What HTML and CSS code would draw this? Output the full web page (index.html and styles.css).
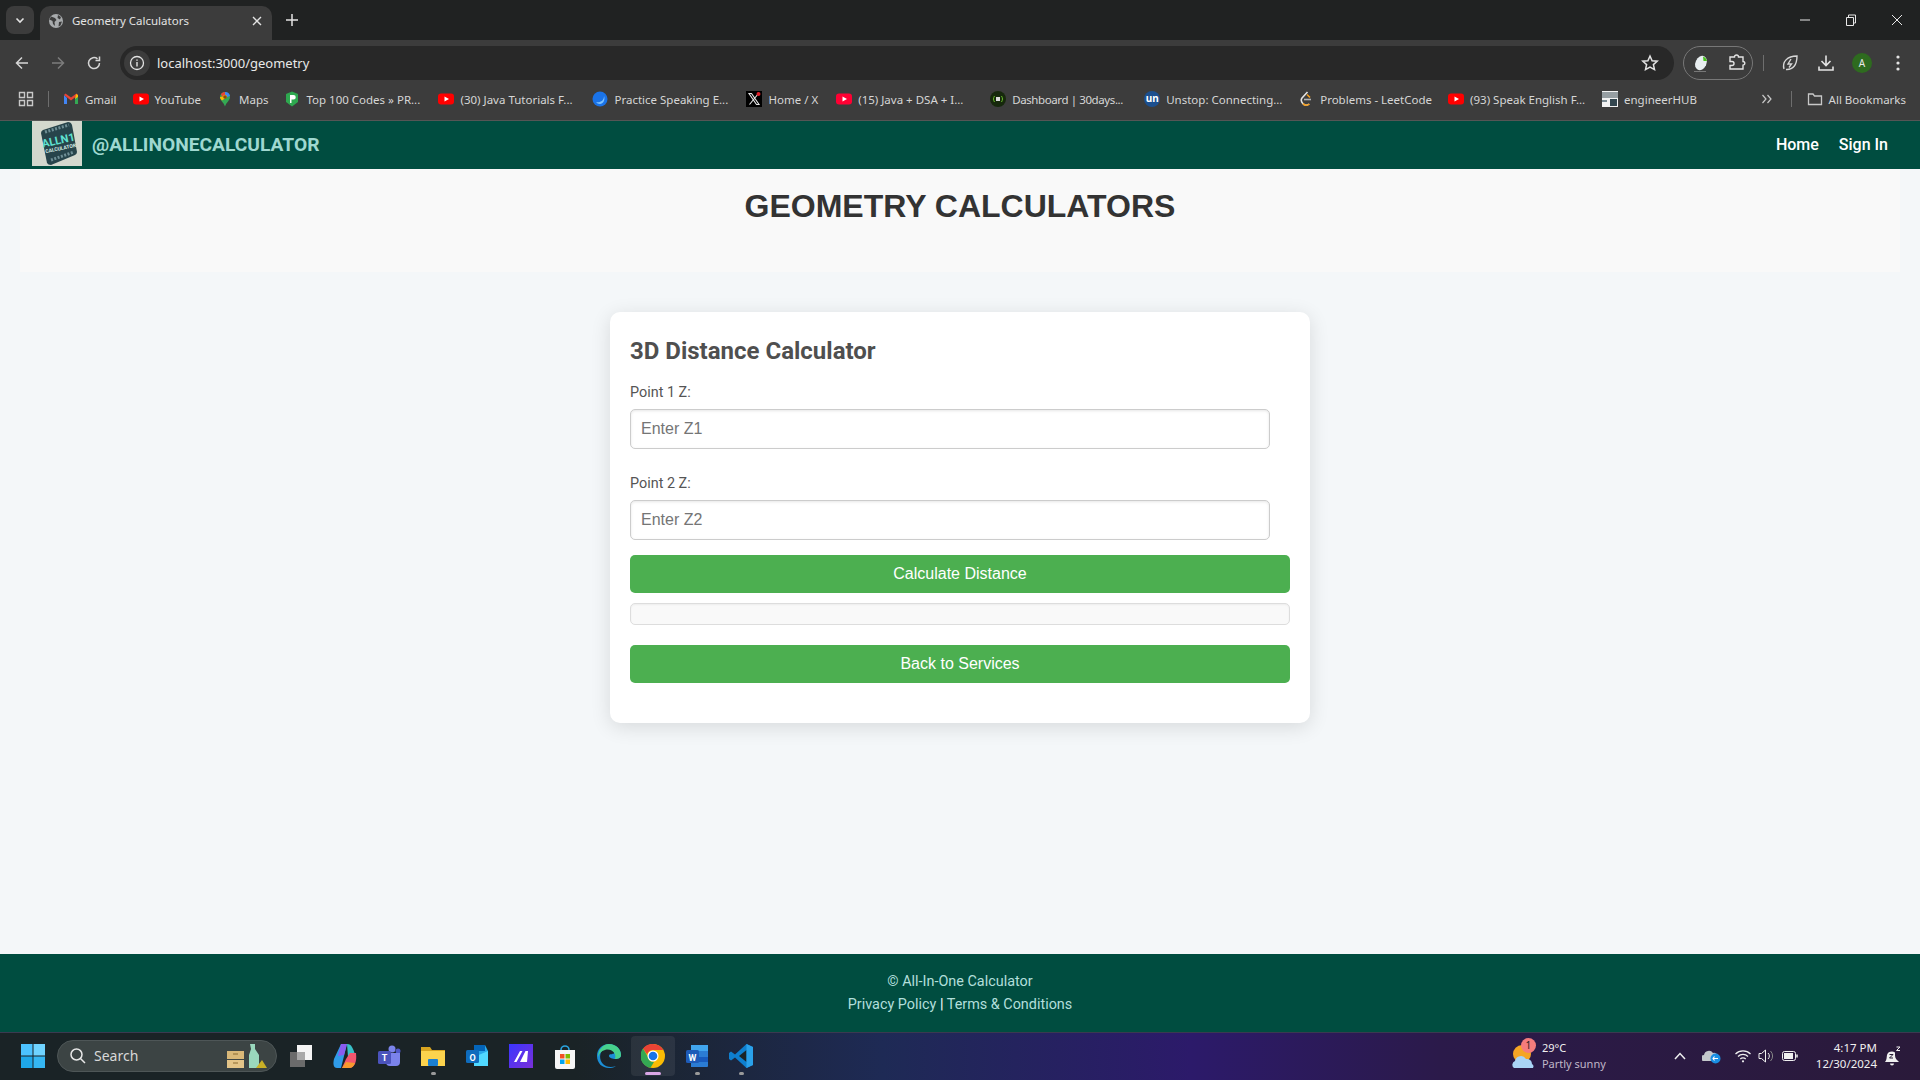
FILE: index.html
```html
<!DOCTYPE html>
<html lang="en">
<head>
    <meta charset="UTF-8">
    <title>Geometry Calculators</title>
    <link rel="stylesheet" href="styles.css">
</head>
<body>
<!-- browser chrome -->
<div class="tabstrip">
    <div class="tabsearch"><svg width="12" height="12" viewBox="0 0 12 12"><path d="M2.5 4.5 6 8l3.5-3.5" fill="none" stroke="#e3e3e3" stroke-width="1.6"/></svg></div>
    <div class="tab">
        <svg width="16" height="16" viewBox="0 0 16 16"><circle cx="8" cy="8" r="7" fill="#a8abad"/><path d="M3 3.5 7 5 8.500 7 6.500 9 7 13 5 11 4.500 8 1.500 6.500ZM10 2l3 2-1 2.500-2.500-1.500ZM11 9l3-.5-1.500 4-2 1Z" fill="#3c3c3c"/></svg>
        <span class="tabtitle">Geometry Calculators</span>
        <svg width="12" height="12" viewBox="0 0 12 12"><path d="M2 2l8 8M10 2l-8 8" stroke="#e3e3e3" stroke-width="1.400"/></svg>
    </div>
    <svg class="newtab" width="14" height="14" viewBox="0 0 14 14"><path d="M7 1v12M1 7h12" stroke="#e3e3e3" stroke-width="1.500"/></svg>
    <div class="winbtns">
        <svg width="12" height="12" viewBox="0 0 12 12"><path d="M1 6h10" stroke="#e8e8e8"/></svg>
        <svg width="12" height="12" viewBox="0 0 12 12"><path d="M1.500 3.500h7v8h-7zM3.500 3.500V1h7v8H8.500" fill="none" stroke="#e8e8e8"/></svg>
        <svg width="12" height="12" viewBox="0 0 12 12"><path d="M1 1l10 10M11 1 1 11" stroke="#e8e8e8"/></svg>
    </div>
</div>
<div class="toolbar">
    <div class="navbtns">
        <svg width="16" height="16" viewBox="0 0 16 16"><path d="M14 8H2.500M8 2.500 2.500 8 8 13.500" fill="none" stroke="#d6d6d6" stroke-width="1.500"/></svg>
        <svg width="16" height="16" viewBox="0 0 16 16"><path d="M2 8h11.500M8 2.500 13.500 8 8 13.500" fill="none" stroke="#7c7c7c" stroke-width="1.500"/></svg>
        <svg width="16" height="16" viewBox="0 0 16 16"><path d="M13.500 8A5.500 5.500 0 1 1 11.500 3.800M13.500 1.500v4h-4" fill="none" stroke="#d6d6d6" stroke-width="1.500"/></svg>
    </div>
    <div class="omnibox">
        <div class="siteinfo"><svg width="16" height="16" viewBox="0 0 16 16"><circle cx="8" cy="8" r="6.500" fill="none" stroke="#e3e3e3" stroke-width="1.300"/><path d="M8 7v4.500M8 4.500v1.300" stroke="#e3e3e3" stroke-width="1.400"/></svg></div>
        <span class="url">localhost:3000/geometry</span>
        <svg width="18" height="18" viewBox="0 0 18 18"><path d="M9 2l2.100 4.700 5.100.5-3.800 3.400 1.100 5L9 13l-4.500 2.600 1.100-5L1.800 7.200l5.100-.5Z" fill="none" stroke="#e3e3e3" stroke-width="1.500"/></svg>
    </div>
    <div class="extpill">
        <svg width="20" height="20" viewBox="0 0 20 20"><ellipse cx="9" cy="10" rx="5.500" ry="7.500" transform="rotate(25 9 10)" fill="#e8eef0"/><path d="M11 3.500a6 6 0 0 1 4 4.500l-3.500 0Z" fill="#46c21b"/><path d="M2 18.500h12" stroke="#777"/></svg>
        <svg width="18" height="18" viewBox="0 0 18 18"><path d="M2 3h4.500a2 2 0 0 1 4 0H15v4.500a1.800 1.800 0 0 1 0 3.600V15H2v-3.500h2a2 2 0 0 0 0-4H2Z" fill="none" stroke="#e3e3e3" stroke-width="1.400"/></svg>
    </div>
    <div class="sep"></div>
    <div class="toolicons">
        <svg width="18" height="18" viewBox="0 0 18 18"><path d="M3 15C1 8 6 2 16 2c0 9-4 14-11 13.500M10 5 7 10h3.500L8 13.500" fill="none" stroke="#d6d6d6" stroke-width="1.400"/></svg>
        <svg width="18" height="18" viewBox="0 0 18 18"><path d="M9 1.500V11M4.500 7 9 11.500 13.500 7M2 12.500V16h14v-3.500" fill="none" stroke="#e3e3e3" stroke-width="1.600"/></svg>
        <div class="avatar">A</div>
        <svg class="menudots" width="4" height="16" viewBox="0 0 4 16"><circle cx="2" cy="2" r="1.600" fill="#e3e3e3"/><circle cx="2" cy="8" r="1.600" fill="#e3e3e3"/><circle cx="2" cy="14" r="1.600" fill="#e3e3e3"/></svg>
    </div>
</div>
<div class="bookmarks">
    <svg class="apps" width="16" height="16" viewBox="0 0 16 16"><path d="M1.500 1.500h5v5h-5zM9.500 1.500h5v5h-5zM1.500 9.500h5v5h-5zM9.500 9.500h5v5h-5z" fill="none" stroke="#c8c8c8" stroke-width="1.400"/></svg>
    <div class="sep"></div>
    <div class="bm"><svg width="16" height="16" viewBox="0 0 16 16"><path d="M1 4v9h3V7Z" fill="#4285f4"/><path d="M15 4v9h-3V7Z" fill="#34a853"/><path d="M1 4l7 5.500L15 4l-1.500-1.500L8 6.500 2.500 2.500Z" fill="#ea4335"/><path d="M13 3l2 1v2l-3 2Z" fill="#fbbc04"/></svg>Gmail</div>
    <div class="bm"><svg width="16" height="16" viewBox="0 0 16 16"><rect y="2.500" width="16" height="11" rx="3" fill="#f00"/><path d="M6.500 5.500 11 8l-4.500 2.500Z" fill="#fff"/></svg>YouTube</div>
    <div class="bm"><svg width="16" height="16" viewBox="0 0 16 16"><path d="M8 1a5 5 0 0 1 5 5c0 3.500-3.500 5-5 9.500C6.500 11 3 9.500 3 6a5 5 0 0 1 5-5Z" fill="#34a853"/><path d="M4 3a5 5 0 0 1 4-2v3L5 6Z" fill="#ea4335"/><path d="M8 1a5 5 0 0 1 5 4L10 6 8 4Z" fill="#4285f4"/><path d="M3 6c0 1.500 1 2.500 2 3.500L10 6a2 2 0 0 0-4-.5Z" fill="#fbbc04"/><circle cx="8" cy="6" r="1.800" fill="#8a4a12"/></svg>Maps</div>
    <div class="bm cut"><svg width="16" height="16" viewBox="0 0 16 16"><path d="M8 .5 14 3v8l-6 4.500L2 11V3Z" fill="#2ea84f"/><path d="M6 4h3.500a2.200 2.200 0 0 1 0 4.500H7.500V12H6Z" fill="#fff"/></svg>Top 100 Codes » PR...</div>
    <div class="bm cut"><svg width="16" height="16" viewBox="0 0 16 16"><rect y="2.500" width="16" height="11" rx="3" fill="#f00"/><path d="M6.500 5.500 11 8l-4.500 2.500Z" fill="#fff"/></svg>(30) Java Tutorials F...</div>
    <div class="bm cut"><svg width="16" height="16" viewBox="0 0 16 16"><circle cx="8" cy="8" r="7.500" fill="#1a73e8"/><path d="M4 11c4 1 8-1 8-6 1.500 4-1 8-4 8-2 0-3-1-4-2Z" fill="#7fc4ff"/></svg>Practice Speaking E...</div>
    <div class="bm homex"><svg width="16" height="16" viewBox="0 0 16 16"><rect width="16" height="16" fill="#000"/><path d="M3 2.500h2.500l7.500 11h-2.500ZM12.500 2.500 3.500 13.500" fill="none" stroke="#e6e6e6" stroke-width="1.100"/><circle cx="12.500" cy="3" r="2" fill="#e0202a"/></svg>Home / X</div>
    <div class="bm cut"><svg width="16" height="16" viewBox="0 0 16 16"><rect y="2.500" width="16" height="11" rx="3" fill="#ff0033"/><path d="M6.500 5.500 11 8l-4.500 2.500Z" fill="#fff"/></svg>(15) Java + DSA + I...</div>
    <div class="bm cut tight"><svg width="16" height="16" viewBox="0 0 16 16"><circle cx="8" cy="8" r="8" fill="#16280c"/><path d="M4.500 5c-1.300 2-1.300 4 0 6M11.500 5c1.300 2 1.300 4 0 6" fill="none" stroke="#6abf2b"/><path d="M6 6h4v4H6z" fill="#dcdcdc"/></svg>Dashboard | 30days...</div>
    <div class="bm cut"><div class="unstop">un</div>Unstop: Connecting...</div>
    <div class="bm"><svg width="16" height="16" viewBox="0 0 16 16"><path d="M9.500 1 4 7c-1.500 2-.5 4 .8 5.500C6 14 8.500 15 11 13" fill="none" stroke="#e3e3e3" stroke-width="1.600"/><path d="M5 12.500C6.500 14.500 9 15 11.500 13" fill="none" stroke="#f89f1b" stroke-width="1.600"/><path d="M6 8.500h7" stroke="#b3b3b3" stroke-width="1.600"/><path d="M9 3.500 12 6.500" stroke="#f89f1b" stroke-width="1.600"/></svg>Problems - LeetCode</div>
    <div class="bm cut"><svg width="16" height="16" viewBox="0 0 16 16"><rect y="2.500" width="16" height="11" rx="3" fill="#f00"/><path d="M6.500 5.500 11 8l-4.500 2.500Z" fill="#fff"/></svg>(93) Speak English F...</div>
    <div class="bm"><svg width="16" height="16" viewBox="0 0 16 16"><rect width="16" height="16" fill="#f2f2f2"/><path d="M0 2h16M0 4h16M0 6h16" stroke="#3a4a52"/><rect x="8" y="8" width="7" height="7" fill="#33464f"/><rect y="9" width="5" height="2" fill="#7a8a92"/></svg>engineerHUB</div>
    <div class="bmright">
        <svg width="12" height="12" viewBox="0 0 12 12"><path d="M1.500 2 5 6l-3.500 4M6.500 2 10 6l-3.500 4" fill="none" stroke="#c8c8c8" stroke-width="1.200"/></svg>
        <div class="sep"></div>
        <div class="bm"><svg width="16" height="16" viewBox="0 0 16 16"><path d="M1.500 3h4.500l1.500 2h7v8.500h-13Z" fill="none" stroke="#c8c8c8" stroke-width="1.300"/></svg>All Bookmarks</div>
    </div>
</div>

<!-- the page -->
<nav class="navbar">
    <div class="brand">
        <svg class="logo" width="50" height="45" viewBox="0 0 50 45">
            <rect width="50" height="45" fill="#d3d8ce"/>
            <path d="M11 9 36 1q3 0 4 3l5 27q0 2-2 3L19 44q-3 0-4-2L9 12q0-2 2-3Z" fill="#27444b"/>
            <path d="M13 11 37 4M19 39 42 31" stroke="#6f8f96" stroke-width="3" stroke-dasharray="2 1.500"/>
            <text x="27" y="23" class="logotext" transform="rotate(-12 27 23)">ALLN1</text>
            <text x="29" y="29" class="logosmall" transform="rotate(-12 29 29)">CALCULATOR</text>
        </svg>
        <span class="brandname">@ALLINONECALCULATOR</span>
    </div>
    <div class="navlinks">
        <a href="#">Home</a>
        <a href="#">Sign In</a>
    </div>
</nav>
<main class="content">
    <header class="band"><h1>GEOMETRY CALCULATORS</h1></header>
    <section class="card">
        <h2>3D Distance Calculator</h2>
        <label for="z1">Point 1 Z:</label>
        <input id="z1" type="text" placeholder="Enter Z1">
        <label for="z2">Point 2 Z:</label>
        <input id="z2" type="text" placeholder="Enter Z2">
        <button class="calc">Calculate Distance</button>
        <div class="result"></div>
        <button class="back">Back to Services</button>
    </section>
</main>
<footer class="footer">
    <p>© All-In-One Calculator</p>
    <p><a href="#">Privacy Policy</a> <span class="pipe">|</span> <a href="#">Terms &amp; Conditions</a></p>
</footer>

<!-- windows taskbar -->
<div class="taskbar">
    <svg class="start" width="24" height="24" viewBox="0 0 24 24"><path d="M0 0h11.500v11.500H0z" fill="#4cc2ff"/><path d="M12.500 0H24v11.500H12.500z" fill="#6fd3ff"/><path d="M0 12.500h11.500V24H0z" fill="#1ea7e8"/><path d="M12.500 12.500H24V24H12.500z" fill="#35b6f2"/></svg>
    <div class="search">
        <svg width="18" height="18" viewBox="0 0 18 18"><circle cx="7.500" cy="7.500" r="5.500" fill="none" stroke="#e8e8e8" stroke-width="1.500"/><path d="M11.500 11.500 16 16" stroke="#e8e8e8" stroke-width="1.500"/></svg>
        <span>Search</span>
        <svg class="searchart" width="42" height="28" viewBox="0 0 42 28"><rect x="1" y="9" width="17" height="8" fill="#d9b878"/><rect x="1" y="18" width="17" height="8" fill="#e3c488"/><path d="M7 12h5M7 21h5" stroke="#8a6a30"/><path d="M24 2h5v5l4 6v13h-10V13l2-6Z" fill="#9ad8bd"/><path d="M30 26l6-8 5 8Z" fill="#c9b026"/></svg>
    </div>
    <div class="taskicons">
        <div class="ti"><svg width="24" height="24" viewBox="0 0 24 24"><rect x="1" y="8" width="15" height="15" fill="#6b6b6b"/><rect x="8" y="1" width="15" height="15" fill="#f4f4f4"/><rect x="8" y="8" width="8" height="8" fill="#a8a8a8"/></svg></div>
        <div class="ti"><svg width="24" height="26" viewBox="0 0 24 26"><path d="M8 1h6L8 25H4C0 25 0 20 1 16Z" fill="#2f9be8"/><path d="M8 1h6l-3 11-6 1Z" fill="#8a5cf0"/><path d="M14 1c5 0 6 5 8 10l-7 3Z" fill="#38c0c8"/><path d="M17 10h6c1 8-1 15-7 15H9l4-9Z" fill="#f2566e"/><path d="M9 25h7c3 0 5-2 6-5l-9-1Z" fill="#f79a2e"/></svg></div>
        <div class="ti"><svg width="24" height="24" viewBox="0 0 24 24"><circle cx="15" cy="5" r="3.500" fill="#7b83eb"/><circle cx="21" cy="7" r="2.500" fill="#5059c9"/><path d="M9 9h14v9a4 4 0 0 1-4 4h-6a4 4 0 0 1-4-4Z" fill="#7b83eb"/><rect x="1" y="7" width="13" height="13" rx="1.500" fill="#4b53bc"/><text x="7.500" y="17" class="ticon">T</text></svg></div>
        <div class="ti"><svg width="24" height="24" viewBox="0 0 24 24"><path d="M0 3h9l2 3h13v4H0Z" fill="#d9a520"/><path d="M0 7h24v15H0Z" fill="#fcd34d"/><rect x="7" y="15" width="10" height="7" rx="1" fill="#1a7fd1"/></svg><i class="dot"></i></div>
        <div class="ti"><svg width="24" height="24" viewBox="0 0 24 24"><path d="M9 1h11l3 6v12a3 3 0 0 1-3 3H9Z" fill="#28a8ea"/><path d="M9 1h11v6H9Z" fill="#0364b8"/><path d="M9 13l14-6v15H9Z" fill="#50d9ff"/><rect x="1" y="6" width="13" height="13" rx="1.500" fill="#0f6cbd"/><text x="7.500" y="16.500" class="ticon">O</text></svg></div>
        <div class="ti"><svg width="24" height="24" viewBox="0 0 24 24"><defs><linearGradient id="mw" x1="0" y1="0" x2="1" y2="1"><stop offset="0" stop-color="#3a35ff"/><stop offset="1" stop-color="#7a30d8"/></linearGradient></defs><rect width="24" height="24" fill="url(#mw)"/><path d="M5 18 11 7h2.500L7.500 18ZM11 18 16.500 7H19l-1 11Z" fill="#fff"/></svg></div>
        <div class="ti"><svg width="24" height="26" viewBox="0 0 24 26"><path d="M8 7a4 4 0 0 1 8 0" fill="none" stroke="#2aa5e0" stroke-width="1.600"/><path d="M2 7h20v17a2 2 0 0 1-2 2H4a2 2 0 0 1-2-2Z" fill="#f6f6f6"/><path d="M7 11h4.500v4.500H7z" fill="#f25022"/><path d="M12.500 11H17v4.500h-4.500z" fill="#7fba00"/><path d="M7 16.500h4.500V21H7z" fill="#00a4ef"/><path d="M12.500 16.500H17V21h-4.500z" fill="#ffb900"/></svg></div>
        <div class="ti"><svg width="24" height="24" viewBox="0 0 24 24"><path d="M12 0c7 0 12 5 12 11 0 3-3 4-6 4-2 0-6-1-6-3 0-3 5-1 5-3C17 5 11 3 7 5 2 8 2 16 6 20c3 3 8 4 13 2-3 2-5 2-7 2C5 24 0 19 0 12S5 0 12 0Z" fill="#1b8ed6"/><path d="M12 0c7 0 12 5 12 11 0 3-3 4-6 4 2-6-4-11-10-9C4 7 2 10 1 13 1 6 6 0 12 0Z" fill="#47d18c"/></svg></div>
        <div class="ti active"><svg width="24" height="24" viewBox="0 0 24 24"><circle cx="12" cy="12" r="12" fill="#fbbc04"/><path d="M12 0a12 12 0 0 1 10.400 6H12a6 6 0 0 0-5.800 4.500L2 4.500A12 12 0 0 1 12 0Z" fill="#ea4335"/><path d="M2 4.500l5 8.500a6 6 0 0 0 6 5l-3.500 5.800A12 12 0 0 1 2 4.500Z" fill="#34a853"/><circle cx="12" cy="12" r="5.500" fill="#fff"/><circle cx="12" cy="12" r="4.300" fill="#1a73e8"/></svg><i class="bar"></i></div>
        <div class="ti"><svg width="24" height="24" viewBox="0 0 24 24"><path d="M6 1h16a1 1 0 0 1 1 1v20a1 1 0 0 1-1 1H6Z" fill="#2b7cd3"/><path d="M6 1h17v6H6Z" fill="#41a5ee"/><path d="M6 13h17v5H6Z" fill="#185abd"/><rect x="1" y="6" width="13" height="13" rx="1.500" fill="#1e5bb8"/><text x="7.500" y="16.500" class="ticon">W</text></svg><i class="dot"></i></div>
        <div class="ti"><svg width="24" height="24" viewBox="0 0 24 24"><path d="M17.500 0 24 3v18l-6.500 3L6 13.500 2 16.500 0 15V9l2-1.500 4 3Z" fill="#0e7fcf"/><path d="M17.500 6 10 12l7.500 6Z" fill="#1a2326"/><path d="M17.500 0 24 3v18l-6.500 3Z" fill="#2aa1ea"/></svg><i class="dot"></i></div>
    </div>
    <div class="tray">
        <div class="weather">
            <svg width="24" height="28" viewBox="0 0 24 28"><circle cx="11" cy="12" r="9" fill="#f5a524"/><path d="M3 26a4 4 0 0 1 1-7 6 6 0 0 1 11-2 5 5 0 0 1 6 5 3 3 0 0 1 1 4Z" fill="#a9d4f5"/></svg>
            <span class="badge">1</span>
            <div class="wtext"><span>29°C</span><span class="wdim">Partly sunny</span></div>
        </div>
        <svg class="chev" width="12" height="8" viewBox="0 0 12 8"><path d="M1 7l5-5.500L11 7" fill="none" stroke="#f0f0f0" stroke-width="1.500"/></svg>
        <svg class="onedrive" width="20" height="16" viewBox="0 0 20 16"><path d="M2 13a3 3 0 0 1 0-6 5 5 0 0 1 9-2 4 4 0 0 1 5 3v5Z" fill="#c4c8cc"/><circle cx="13.500" cy="10.500" r="5" fill="#1a8fe3"/><path d="M11 10.500h5M12.500 8.500l-1.500 2 1.500 2" fill="none" stroke="#fff" stroke-width="1.100"/></svg>
        <svg class="wifi" width="16" height="14" viewBox="0 0 16 14"><path d="M.5 5a10.500 10.500 0 0 1 15 0M3 7.500a7 7 0 0 1 10 0M5.300 10a3.700 3.700 0 0 1 5.400 0" fill="none" stroke="#f0f0f0" stroke-width="1.200"/><circle cx="8" cy="12.300" r="1.100" fill="#f0f0f0"/></svg>
        <svg class="vol" width="16" height="14" viewBox="0 0 16 14"><path d="M1 4.500h2.500L7.500 1v12L3.500 9.500H1Z" fill="none" stroke="#f0f0f0"/><path d="M10 4a4 4 0 0 1 0 6" fill="none" stroke="#f0f0f0"/><path d="M12.500 2a7 7 0 0 1 0 10" fill="none" stroke="#888"/></svg>
        <svg class="batt" width="16" height="10" viewBox="0 0 16 10"><rect x=".5" y=".5" width="13" height="9" rx="2" fill="none" stroke="#f0f0f0"/><rect x="2" y="2" width="9" height="6" fill="#f0f0f0"/><path d="M15 3.500v3" stroke="#f0f0f0" stroke-width="1.500"/></svg>
        <div class="clock"><span>4:17 PM</span><span>12/30/2024</span></div>
        <svg class="bell" width="18" height="20" viewBox="0 0 18 20"><path d="M1 16c2-2 1.500-5 2-7 .6-2.500 2.500-3.500 5-3.500 1 0 2 .2 3 1v3c0 3 2 4.500 4 6.500Z" fill="#f0f0f0"/><path d="M6 17.500a2 2 0 0 0 4 0Z" fill="#f0f0f0"/><path d="M5.500 8.500h3.500l-3.500 3.500H9" fill="none" stroke="#241a33"/><path d="M12.500 1H16l-3.500 3.500H16" fill="none" stroke="#f0f0f0"/></svg>
    </div>
</div>
</body>
</html>
```

FILE: styles.css
```css
* {
    box-sizing: border-box;
}
html, body {
    margin: 0;
    height: 100%;
}
body {
    display: flex;
    flex-direction: column;
    height: 1080px;
    overflow: hidden;
    background: #f4f7f9;
    font-family: Roboto, "Liberation Sans", sans-serif;
}
svg {
    flex: none;
    display: block;
}

/* browser chrome */
.tabstrip {
    display: flex;
    align-items: flex-end;
    height: 40px;
    background: #202222;
    padding-left: 6px;
}
.tabsearch {
    display: flex;
    align-items: center;
    justify-content: center;
    width: 28px;
    height: 28px;
    margin-bottom: 6px;
    border-radius: 8px;
    background: #3c3c3c;
}
.tab {
    display: flex;
    align-items: center;
    width: 232px;
    height: 34px;
    margin-left: 6px;
    padding: 0 9px 5px 8px;
    border-radius: 10px 10px 0 0;
    background: #3c3c3c;
}
.tabtitle {
    flex: 1;
    margin-left: 8px;
    font: 11.500px "Noto Sans", sans-serif;
    color: #e3e3e3;
}
.newtab {
    margin: 0 0 13px 13px;
}
.winbtns {
    display: flex;
    gap: 34px;
    margin-left: auto;
    padding: 0 17px 14px 0;
}
.toolbar {
    display: flex;
    align-items: flex-end;
    height: 40px;
    background: #3c3c3c;
}
.navbtns {
    display: flex;
    gap: 20px;
    width: 120px;
    height: 34px;
    padding: 9px 0 0 14px;
}
.omnibox {
    display: flex;
    align-items: center;
    width: 1554px;
    height: 34px;
    padding: 0 15px 0 4px;
    border-radius: 17px;
    background: #282828;
}
.siteinfo {
    display: flex;
    align-items: center;
    justify-content: center;
    width: 26px;
    height: 26px;
    border-radius: 50%;
    background: #3c3c3c;
}
.url {
    flex: 1;
    margin-left: 7px;
    font: 13px "Noto Sans", sans-serif;
    color: #e8e8e8;
}
.extpill {
    display: flex;
    align-items: center;
    gap: 16px;
    width: 70px;
    height: 34px;
    margin-left: 9px;
    padding-left: 8px;
    border: 1px solid #777;
    border-radius: 17px;
}
.sep {
    flex: none;
    width: 1px;
    height: 16px;
    background: #6e6e6e;
}
.toolbar .sep {
    margin: 0 0 9px 10px;
}
.toolicons {
    display: flex;
    align-items: center;
    gap: 18px;
    height: 34px;
    margin-left: 17px;
}
.avatar {
    width: 20px;
    height: 20px;
    margin-left: -1px;
    border-radius: 50%;
    background: #2e6b1f;
    font: 10px/20px "Noto Sans", sans-serif;
    color: #e8e8e8;
    text-align: center;
}
.menudots {
    margin-left: 6px;
}
.bookmarks {
    display: flex;
    align-items: center;
    height: 41px;
    padding: 0 0 2px 18px;
    border-bottom: 1px solid #555;
    background: #3c3c3c;
}
.bookmarks .sep {
    margin: 0 14px 0 14px;
}
.bm {
    display: flex;
    align-items: center;
    gap: 6px;
    margin-right: 16px;
    font: 11.500px "Noto Sans", sans-serif;
    color: #d6d6d6;
    white-space: nowrap;
}
.cut {
    flex: none;
    width: 138px;
}
.tight {
    letter-spacing: -0.4px;
}
.homex {
    margin-right: 18px;
}
.unstop {
    flex: none;
    width: 16px;
    height: 16px;
    border-radius: 50%;
    background: #1c4f8e;
    font: bold 10px/15px "Noto Sans", sans-serif;
    color: #fff;
    text-align: center;
}
.bmright {
    display: flex;
    align-items: center;
    margin-left: auto;
}
.bmright .sep {
    margin: 0 15px 0 18px;
}
.bmright .bm {
    margin-right: 14px;
}

/* page */
.navbar {
    display: flex;
    align-items: center;
    justify-content: space-between;
    flex: none;
    height: 48px;
    padding: 0 32px;
    background: #004d40;
}
.brand {
    display: flex;
    align-items: center;
    gap: 10px;
    height: 48px;
}
.logo {
    align-self: flex-start;
}
.logotext {
    font: bold 11px Roboto, sans-serif;
    fill: #5fe0d0;
    text-anchor: middle;
}
.logosmall {
    font: bold 5px Roboto, sans-serif;
    fill: #d8f0ea;
    text-anchor: middle;
}
.brandname {
    margin-bottom: 2px;
    font-size: 19.200px;
    font-weight: bold;
    color: #9fd8d0;
}
.navlinks {
    display: flex;
    gap: 20px;
    margin-bottom: 1px;
}
.navlinks a {
    font-size: 16px;
    font-weight: 500;
    color: #fff;
    text-decoration: none;
}
.content {
    flex: 1;
    display: flex;
    flex-direction: column;
    align-items: center;
}
.band {
    align-self: stretch;
    height: 103px;
    margin: 0 20px;
    padding-top: 17px;
    background: #f9f9f9;
}
.band h1 {
    margin: 0;
    font: bold 32px/40px "Liberation Sans", sans-serif;
    color: #333;
    text-align: center;
}
.card {
    display: flex;
    flex-direction: column;
    align-items: flex-start;
    width: 700px;
    height: 411px;
    margin-top: 40px;
    padding: 20px;
    border-radius: 10px;
    background: #fff;
    box-shadow: 0 4px 20px rgba(0, 0, 0, 0.12);
}
.card h2 {
    margin: 1px 0 16px;
    font-size: 24px;
    font-weight: bold;
    line-height: 36px;
    color: #4f4f4f;
}
.card label {
    margin-bottom: 8px;
    font-size: 14.400px;
    line-height: 16px;
    color: #555;
}
.card input {
    width: 640px;
    height: 40px;
    margin-bottom: 27px;
    padding: 0 10px;
    border: 1px solid #ccc;
    border-radius: 5px;
    outline: none;
    box-shadow: inset 0 1px 3px rgba(0, 0, 0, 0.1);
    font: 16px "Liberation Sans", sans-serif;
}
.card input:last-of-type {
    margin-bottom: 15px;
}
.card input::placeholder {
    color: #757575;
}
.card button {
    width: 660px;
    height: 38px;
    border: none;
    border-radius: 5px;
    background: #4caf50;
    font: 16px "Liberation Sans", sans-serif;
    color: #fff;
}
.result {
    width: 660px;
    height: 22px;
    margin: 10px 0 20px;
    border: 1px solid #ddd;
    border-radius: 5px;
    background: #f9f9f9;
    box-shadow: inset 0 1px 2px rgba(0, 0, 0, 0.05);
}
.footer {
    flex: none;
    height: 79px;
    padding-top: 16px;
    border-bottom: 1px solid #3a3a50;
    background: #004d40;
    font-size: 14.400px;
    line-height: 23px;
    color: #b2dfdb;
    text-align: center;
}
.footer p {
    margin: 0;
}
.footer a {
    color: #b2dfdb;
    text-decoration: none;
}
.pipe {
    color: #fff;
}

/* taskbar */
.taskbar {
    display: flex;
    align-items: center;
    flex: none;
    height: 47px;
    padding: 0 0 2px 21px;
    background: linear-gradient(90deg, #1a2326 0, #1a2326 30%, #1e2a55 46%, #2c1a6a 62%, #2b1a4a 75%, #2a1a3a 100%);
}
.search {
    display: flex;
    align-items: center;
    width: 220px;
    height: 32px;
    margin-left: 12px;
    padding: 0 8px 0 11px;
    border: 1px solid #4e5657;
    border-radius: 16px;
    background: #3c4444;
    font: 14px "Noto Sans", sans-serif;
    color: #d8d8d8;
}
.search span {
    margin-left: 7px;
}
.searchart {
    margin-left: auto;
}
.taskicons {
    display: flex;
    margin-left: 2px;
}
.ti {
    position: relative;
    display: flex;
    align-items: center;
    justify-content: center;
    width: 44px;
    height: 40px;
    border-radius: 4px;
}
.ti.active {
    background: rgba(255, 255, 255, 0.07);
}
.ticon {
    font: bold 9px Roboto, sans-serif;
    fill: #fff;
    text-anchor: middle;
}
.dot, .bar {
    position: absolute;
    bottom: 1px;
    left: 20px;
    width: 5px;
    height: 3px;
    border-radius: 2px;
    background: #9a9a9a;
}
.bar {
    left: 14px;
    width: 16px;
    background: #d9a6e6;
}
.tray {
    display: flex;
    align-items: center;
    margin-left: auto;
    color: #f0f0f0;
}
.weather {
    position: relative;
    display: flex;
    align-items: center;
    gap: 7px;
}
.badge {
    position: absolute;
    top: -2px;
    left: 10px;
    width: 15px;
    height: 15px;
    border-radius: 50%;
    background: #f47c7c;
    font: 10px/15px "Noto Sans", sans-serif;
    color: #222;
    text-align: center;
}
.wtext {
    display: flex;
    flex-direction: column;
    font: 11px/16px "Noto Sans", sans-serif;
}
.wdim {
    color: #c0b8c8;
}
.chev {
    margin-left: 68px;
}
.onedrive {
    margin-left: 16px;
}
.wifi {
    margin-left: 13px;
}
.vol {
    margin-left: 7px;
}
.batt {
    margin-left: 8px;
}
.clock {
    display: flex;
    flex-direction: column;
    align-items: flex-end;
    margin-left: 18px;
    font: 11.500px/16px "Noto Sans", sans-serif;
}
.bell {
    margin: 0 18px 0 7px;
}
```
